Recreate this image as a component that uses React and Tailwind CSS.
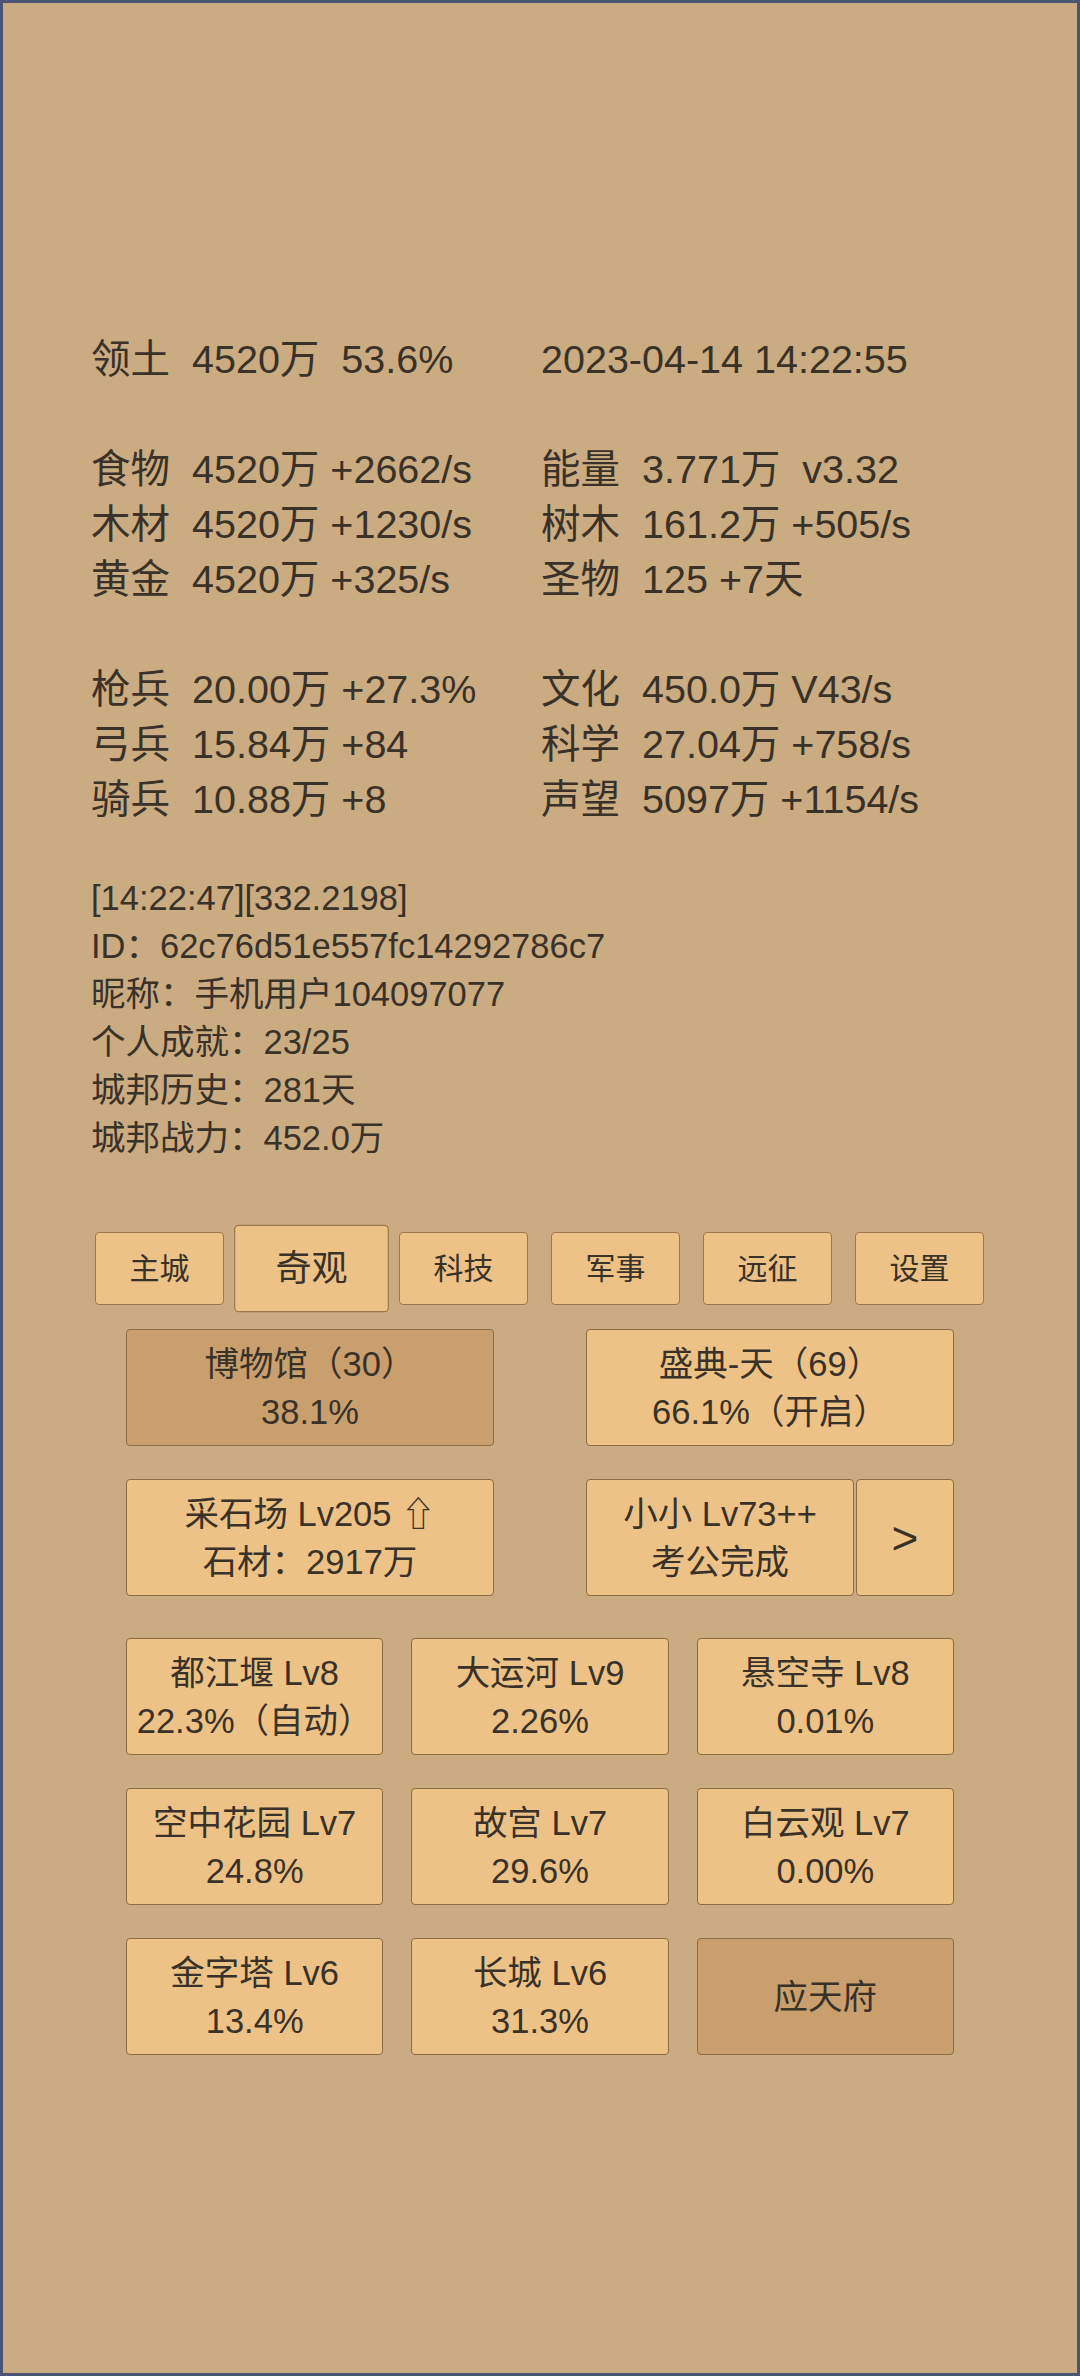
const FONT = { fontFamily: '"Liberation Sans", "Noto Sans CJK SC", sans-serif' };

const STAT_GROUPS = [
  [[['领土', '4520万  53.6%'], ['', '2023-04-14 14:22:55']]],
  [
    [['食物', '4520万 +2662/s'], ['能量', '3.771万  v3.32']],
    [['木材', '4520万 +1230/s'], ['树木', '161.2万 +505/s']],
    [['黄金', '4520万 +325/s'], ['圣物', '125 +7天']],
  ],
  [
    [['枪兵', '20.00万 +27.3%'], ['文化', '450.0万 V43/s']],
    [['弓兵', '15.84万 +84'], ['科学', '27.04万 +758/s']],
    [['骑兵', '10.88万 +8'], ['声望', '5097万 +1154/s']],
  ],
];

const INFO = [
  '[14:22:47][332.2198]',
  'ID：62c76d51e557fc14292786c7',
  '昵称：手机用户104097077',
  '个人成就：23/25',
  '城邦历史：281天',
  '城邦战力：452.0万',
];

const TABS = ['主城', '奇观', '科技', '军事', '远征', '设置'];

const WONDERS = [
  ['都江堰 Lv8', '22.3%（自动）'],
  ['大运河 Lv9', '2.26%'],
  ['悬空寺 Lv8', '0.01%'],
  ['空中花园 Lv7', '24.8%'],
  ['故宫 Lv7', '29.6%'],
  ['白云观 Lv7', '0.00%'],
  ['金字塔 Lv6', '13.4%'],
  ['长城 Lv6', '31.3%'],
];

function StatCell({ label, value }) {
  if (!label) return <div className="whitespace-pre">{value}</div>;
  return (
    <div className="flex">
      <span className="w-[101px] shrink-0">{label}</span>
      <span className="whitespace-pre">{value}</span>
    </div>
  );
}

function Card({ lines, dark = false, className = '' }) {
  return (
    <div
      className={
        'flex h-[117px] flex-col items-center justify-center rounded-[4px] border-[1.5px] border-[#8c6c44] text-center text-[34.5px] leading-[48px] whitespace-pre ' +
        (dark ? 'bg-[#c99f6e] ' : 'bg-[#ecc287] ') +
        className
      }
    >
      {lines.map((l, i) => (
        <div key={i}>{l}</div>
      ))}
    </div>
  );
}

export default function App() {
  return (
    <div
      className="h-[2376px] w-[1080px] overflow-hidden border-[3px] border-[#4b5676] bg-[#caab82] pl-[88px] pt-[329px] text-[#3a3128]"
      style={FONT}
    >
      {/* resources */}
      <div className="flex flex-col gap-[55px] text-[39.5px] leading-[55px]">
        {STAT_GROUPS.map((group, gi) => (
          <div key={gi}>
            {group.map((row, ri) => (
              <div key={ri} className="grid grid-cols-[450px_1fr]">
                <StatCell label={row[0][0]} value={row[0][1]} />
                <StatCell label={row[1][0]} value={row[1][1]} />
              </div>
            ))}
          </div>
        ))}
      </div>

      {/* player info */}
      <div className="mt-[47px] text-[34.5px] leading-[48px]">
        {INFO.map((t) => (
          <div key={t}>{t}</div>
        ))}
      </div>

      {/* tabs */}
      <div className="ml-[4px] mt-[70px] flex gap-[23px]">
        {TABS.map((t) => (
          <div
            key={t}
            className={
              'flex h-[73px] w-[129px] items-center justify-center rounded-[4px] border-[1.5px] border-[#9a7850] bg-[#ecc287] text-[30px] ' +
              (t === '奇观' ? 'scale-[1.2]' : '')
            }
          >
            {t}
          </div>
        ))}
      </div>

      {/* wonders */}
      <div className="ml-[35px] mt-[24px] w-[828px]">
        <div className="flex justify-between">
          <Card dark lines={['博物馆（30）', '38.1%']} className="w-[368px]" />
          <Card lines={['盛典-天（69）', '66.1%（开启）']} className="w-[368px]" />
        </div>
        <div className="mt-[33px] flex justify-between">
          <Card lines={['采石场 Lv205 ⇧', '石材：2917万']} className="w-[368px]" />
          <div className="flex w-[368px] gap-[2px]">
            <Card lines={['小小 Lv73++', '考公完成']} className="w-[268px]" />
            <Card lines={['>']} className="w-[98px] !text-[46px]" />
          </div>
        </div>
        <div className="mt-[42px] grid grid-cols-3 gap-x-[28px] gap-y-[33px]">
          {WONDERS.map((w) => (
            <Card key={w[0]} lines={w} />
          ))}
          <Card dark lines={['应天府']} />
        </div>
      </div>
    </div>
  );
}
